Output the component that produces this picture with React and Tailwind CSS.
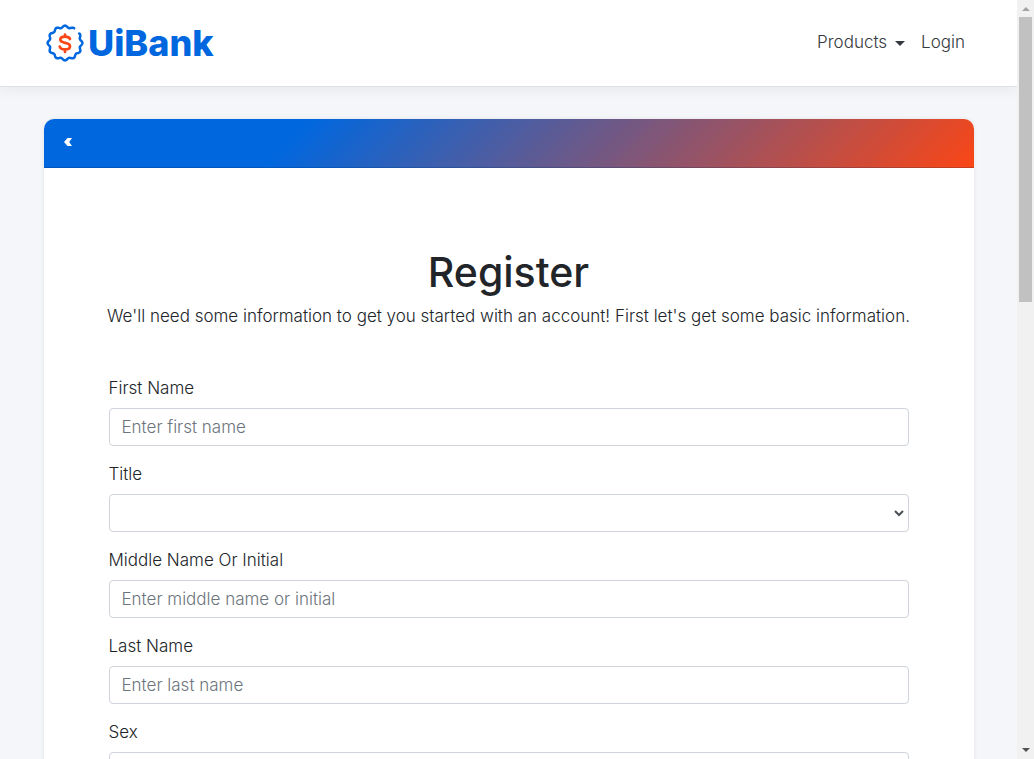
import React from "react";

const fields = [
  { id: "firstName", label: "First Name", placeholder: "Enter first name" },
  { id: "title", label: "Title", options: ["", "Mr", "Mrs", "Ms", "Dr"] },
  { id: "middleName", label: "Middle Name Or Initial", placeholder: "Enter middle name or initial" },
  { id: "lastName", label: "Last Name", placeholder: "Enter last name" },
  { id: "sex", label: "Sex", options: ["", "Male", "Female"] },
];

// Twelve-lobed badge outline, left open at the upper right.
const badgePath = Array.from({ length: 161 }, (_, i) => {
  const angle = ((56 + i * 2.1) * Math.PI) / 180;
  const r = 16.4 + 1 * Math.cos(12 * angle);
  const x = 19 + r * Math.sin(angle);
  const y = 19 - r * Math.cos(angle);
  return `${i ? "L" : "M"}${x.toFixed(2)} ${y.toFixed(2)}`;
}).join("");

function Logo() {
  return (
    <a href="#home" aria-label="UiBank" className="flex items-center gap-1 text-[#0067df]">
      <svg viewBox="0 0 38 38" className="size-[38px]" fill="none" strokeLinecap="round" strokeLinejoin="round">
        <path d={badgePath} stroke="#0067df" strokeWidth="2.5" />
        <path
          d="M24 15C23.400 13.300 21.500 12.600 19 12.600c-2.800 0-4.700 1.100-4.700 3 0 2 1.900 2.700 4.700 3.200 3 .5 5 1.200 5 3.400 0 2-2.200 3.200-5 3.200-2.700 0-4.700-.9-5.300-2.800M19 10.500v2M19 25.500v2.500"
          stroke="#fa4616"
          strokeWidth="2.700"
        />
      </svg>
      <span className="text-[36px] leading-10 font-extrabold">UiBank</span>
    </a>
  );
}

function Field({ field }) {
  const box = "h-[38px] w-full rounded-[4px] border border-[#ced4da] bg-white";
  return (
    <div className="flex flex-col gap-2">
      <label htmlFor={field.id} className="self-start leading-6">{field.label}</label>
      {field.options ? (
        <div className="grid items-center">
          <select id={field.id} className={`${box} col-start-1 row-start-1 appearance-none px-3 text-[#495057]`}>
            {field.options.map((o) => <option key={o}>{o}</option>)}
          </select>
          <svg viewBox="0 0 10 7" className="pointer-events-none col-start-1 row-start-1 mr-[5px] h-[7px] w-[10px] justify-self-end" fill="none">
            <path d="M1 1l4 4 4-4" stroke="#495057" strokeWidth="2" />
          </svg>
        </div>
      ) : (
        <input id={field.id} type="text" placeholder={field.placeholder} className={`${box} px-3 placeholder:text-[#6c757d]`} />
      )}
    </div>
  );
}

function Scrollbar() {
  return (
    <div aria-hidden="true" className="flex w-[17px] shrink-0 flex-col items-center bg-[#f1f1f1]">
      <svg viewBox="0 0 17 17" className="size-[17px]"><path d="M5 11h8L9 7z" fill="#a3a3a3" /></svg>
      <div className="min-h-0 flex-1">
        <div className="h-[39.3%] w-[13px] bg-[#c1c1c1]" />
      </div>
      <svg viewBox="0 0 17 17" className="size-[17px]"><path d="M5 6h8L9 10z" fill="#505050" /></svg>
    </div>
  );
}

export default function App() {
  return (
    <div className="flex h-screen overflow-hidden bg-[#f4f6fa] font-['Inter',sans-serif] text-[17px] text-[#212529]">
      <div className="min-w-0 flex-1 overflow-x-hidden overflow-y-auto [scrollbar-width:none]">
        <header className="border-b border-[#dee2e6] bg-white shadow-[0_4px_12px_rgba(0,0,0,0.05)]">
          <nav className="flex h-[86px] items-center justify-between pr-[52px] pl-[46px]">
            <Logo />
            <div className="flex items-center gap-4 font-light text-[#343a40]">
              <button type="button" className="flex items-center gap-2">
                Products
                <svg viewBox="0 0 10 5" className="h-[5px] w-[10px]"><path d="M0 0h10L5 5z" fill="#343a40" /></svg>
              </button>
              <a href="#login">Login</a>
            </div>
          </nav>
        </header>
        <main className="px-[43px] pt-8">
          <section className="mx-auto max-w-[930px] overflow-hidden rounded-t-[10px] bg-white shadow-[0_0_4px_rgba(0,0,0,0.08)]">
            <div className="flex h-[49px] items-center border-b border-black/15 bg-[linear-gradient(135deg,#0067df_27%,#fa4616_100%)] px-5 pb-[2px]">
              <button type="button" aria-label="Back" className="text-white">
                <svg viewBox="0 0 8 8" className="size-2" fill="currentColor"><path d="M3.500 0h4.500L5.200 4 8 8H3.500L0 4z" /></svg>
              </button>
            </div>
            <div className="px-[50px] pt-20 pb-10 text-center">
              <h1 className="text-[41px] leading-[48px] font-medium">Register</h1>
              <p className="mt-2 leading-6 font-light">
                We'll need some information to get you started with an account! First let's get some basic information.
              </p>
            </div>
            <form className="flex flex-col gap-4 px-[65px] pt-2 pb-16 font-light">
              {fields.map((f) => <Field key={f.id} field={f} />)}
            </form>
          </section>
        </main>
      </div>
      <Scrollbar />
    </div>
  );
}
